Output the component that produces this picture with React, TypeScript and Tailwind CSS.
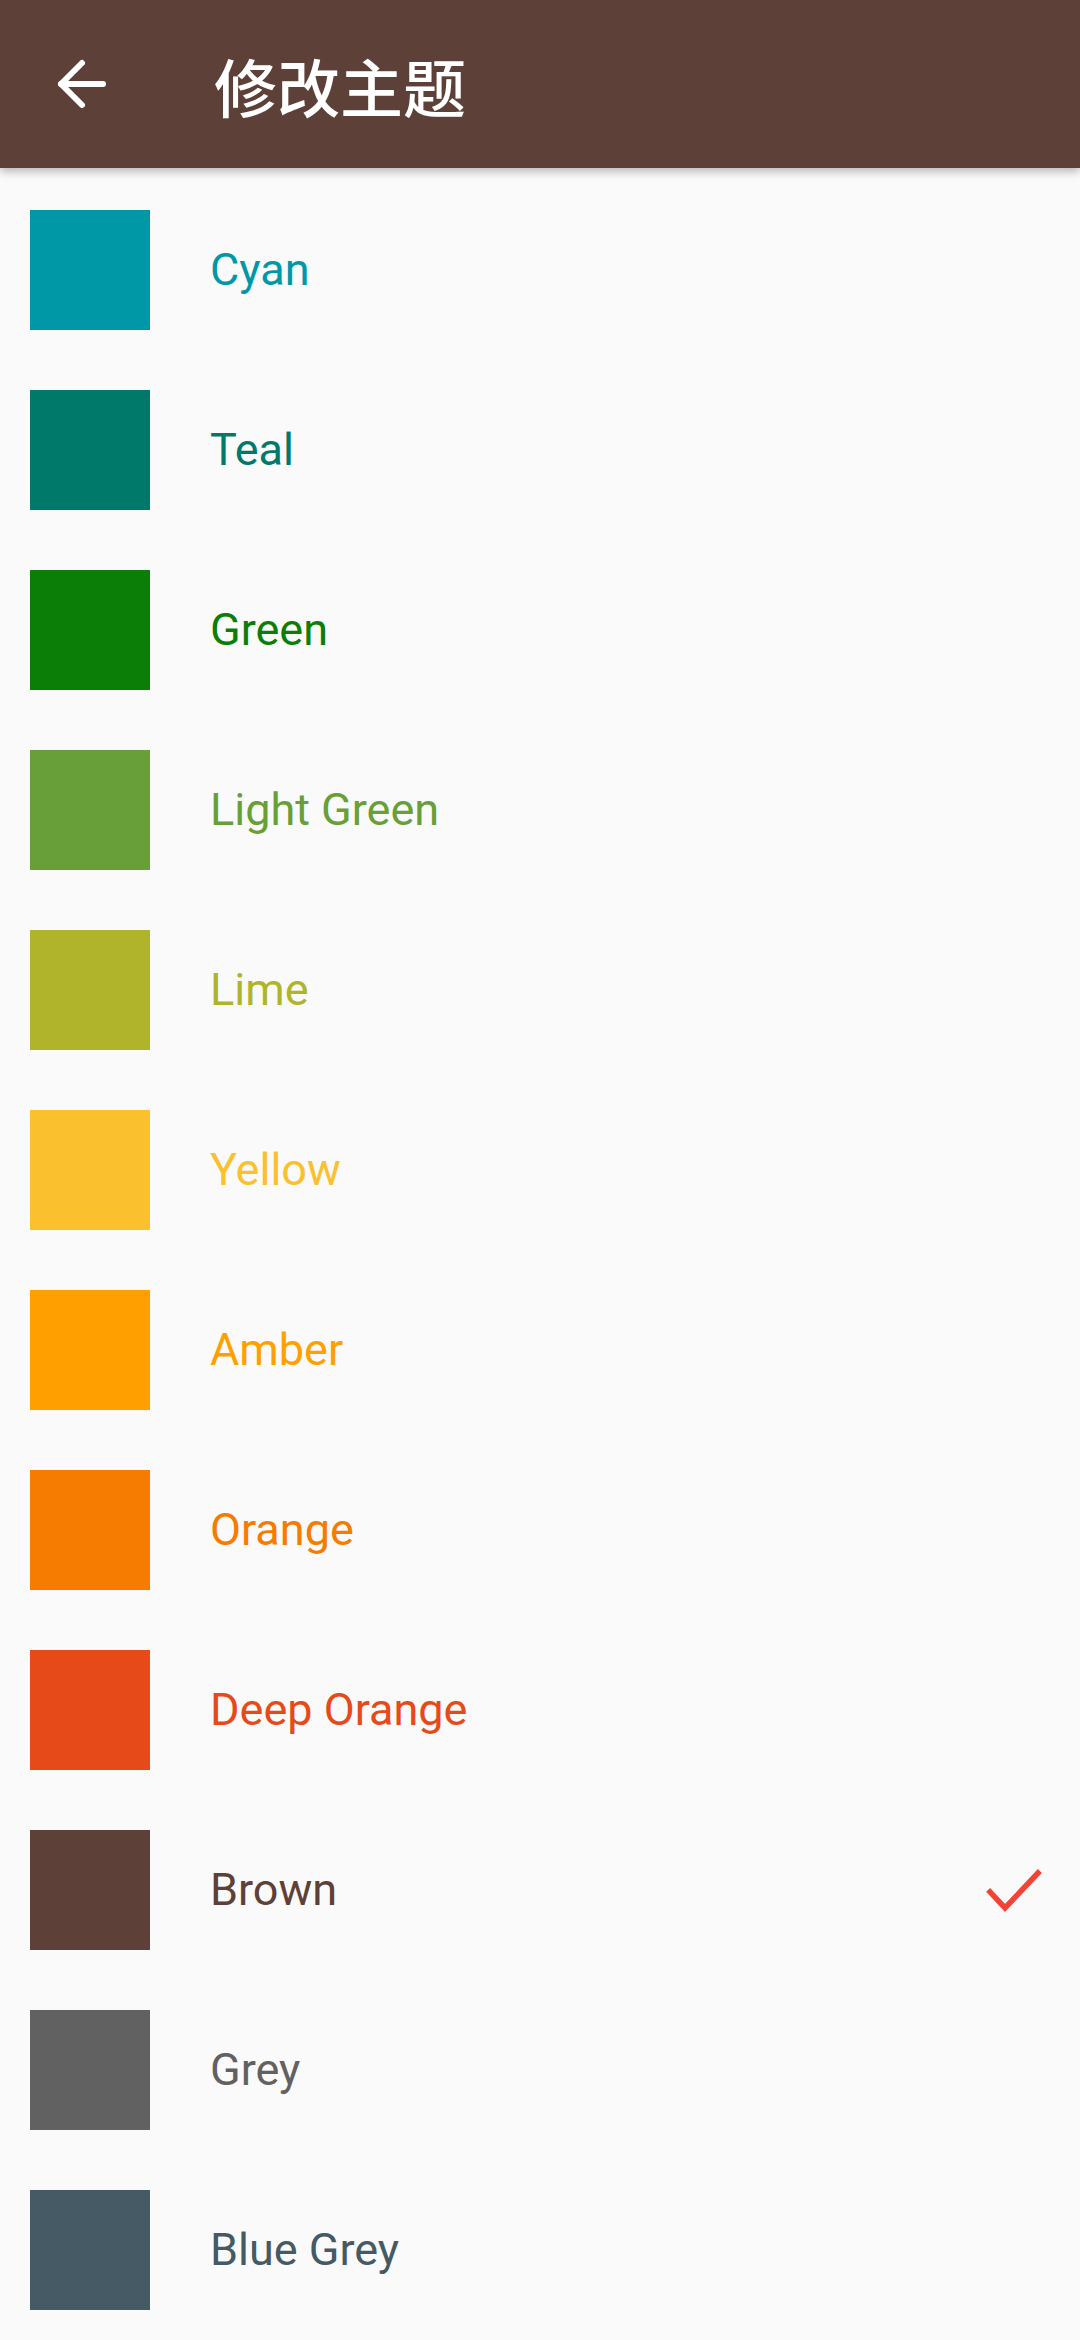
import { ArrowLeft } from 'lucide-react';

const themes = [
  { name: 'Cyan', color: '#0097A7' },
  { name: 'Teal', color: '#00796B' },
  { name: 'Green', color: '#0A7E07' },
  { name: 'Light Green', color: '#689F38' },
  { name: 'Lime', color: '#AFB42B' },
  { name: 'Yellow', color: '#FBC02D' },
  { name: 'Amber', color: '#FFA000' },
  { name: 'Orange', color: '#F57C00' },
  { name: 'Deep Orange', color: '#E64A19' },
  { name: 'Brown', color: '#5D4037' },
  { name: 'Grey', color: '#616161' },
  { name: 'Blue Grey', color: '#455A64' },
];

const selected = 'Brown';

export default function App() {
  return (
    <div className="w-[1080px] h-[2340px] overflow-hidden bg-[#fafafa] flex flex-col" style={{ fontFamily: 'Roboto, "Noto Sans CJK SC", sans-serif' }}>
      {/* Toolbar */}
      <div className="h-[168px] shrink-0 bg-[#5d4037] flex items-center shadow-[0_4px_8px_rgba(0,0,0,0.25)] relative z-10">
        <div className="w-[72px] h-[72px] ml-[46px] flex items-center justify-center text-white">
          <ArrowLeft size={72} strokeWidth={2} />
        </div>
        <h1
          className="ml-[96px] text-white text-[63px] font-medium leading-none"
          style={{ fontFamily: '"Noto Sans CJK SC", sans-serif' }}
        >
          修改主题
        </h1>
      </div>

      {/* Theme list */}
      <div className="flex flex-col pt-[12px]">
        {themes.map(t => (
          <div key={t.name} className="h-[180px] flex items-center pl-[30px] pr-[30px]">
            <div className="w-[120px] h-[120px] shrink-0" style={{ backgroundColor: t.color }} />
            <span className="ml-[60px] flex-1 text-[45px] leading-none pb-[2px]" style={{ color: t.color }}>
              {t.name}
            </span>
            {t.name === selected && (
              <svg width="72" height="72" viewBox="0 0 72 72" className="shrink-0">
                <polyline points="12,38 27,54 60,19" fill="none" stroke="#F44336" strokeWidth="5.5" strokeLinecap="square" />
              </svg>
            )}
          </div>
        ))}
      </div>
    </div>
  );
}
